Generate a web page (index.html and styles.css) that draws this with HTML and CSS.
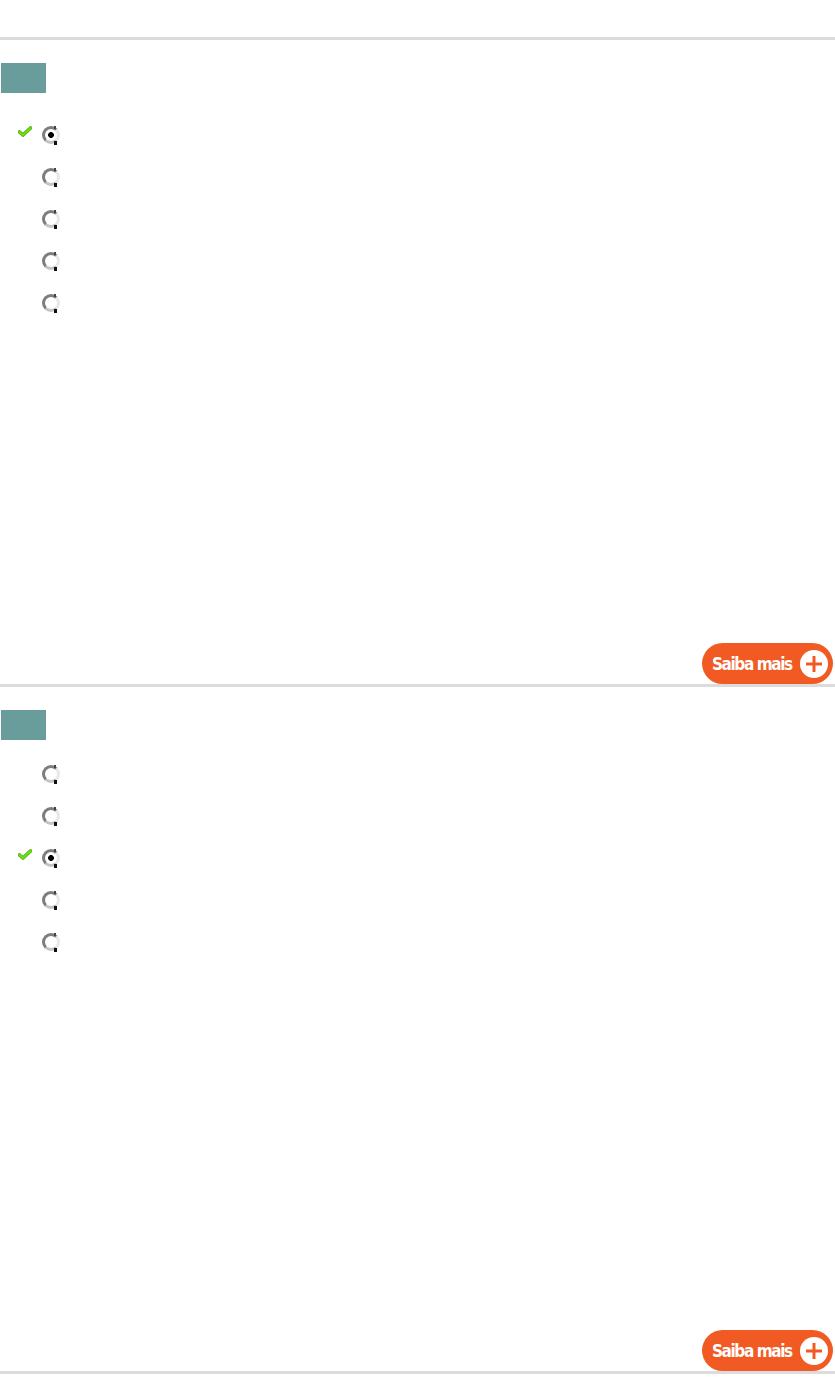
FILE: index.html
```html
<!DOCTYPE html>
<html lang="pt-BR">
<head>
    <meta charset="UTF-8">
    <meta name="viewport" content="width=device-width, initial-scale=1.0">
    <title>Quiz</title>
    <link rel="stylesheet" href="styles.css">
</head>
<body>
    <div class="quiz">
        <!-- Questão 1 -->
        <div class="question">
            <div class="q-number"></div>
            <ul class="options first">
                <li><span class="mark"><svg width="14" height="11" viewBox="0 0 14 11"><path d="M1.5 6 L5 9 L12.5 2" fill="none" stroke="#4aa80c" stroke-width="3.6" stroke-linecap="round" stroke-linejoin="round"/><path d="M1.5 6 L5 9 L12.5 2" fill="none" stroke="#6fe014" stroke-width="2.2" stroke-linecap="round" stroke-linejoin="round"/></svg></span><span class="radio checked"></span></li>
                <li><span class="mark"></span><span class="radio"></span></li>
                <li><span class="mark"></span><span class="radio"></span></li>
                <li><span class="mark"></span><span class="radio"></span></li>
                <li><span class="mark"></span><span class="radio"></span></li>
            </ul>
            <div class="answer-space"></div>
            <div class="actions">
                <a href="#" class="btn-more"><span class="btn-label">Saiba mais</span> <span class="plus"></span></a>
            </div>
        </div>

        <!-- Questão 2 -->
        <div class="question">
            <div class="q-number"></div>
            <ul class="options">
                <li><span class="mark"></span><span class="radio"></span></li>
                <li><span class="mark"></span><span class="radio"></span></li>
                <li><span class="mark"><svg width="14" height="11" viewBox="0 0 14 11"><path d="M1.5 6 L5 9 L12.5 2" fill="none" stroke="#4aa80c" stroke-width="3.6" stroke-linecap="round" stroke-linejoin="round"/><path d="M1.5 6 L5 9 L12.5 2" fill="none" stroke="#6fe014" stroke-width="2.2" stroke-linecap="round" stroke-linejoin="round"/></svg></span><span class="radio checked"></span></li>
                <li><span class="mark"></span><span class="radio"></span></li>
                <li><span class="mark"></span><span class="radio"></span></li>
            </ul>
            <div class="answer-space tall"></div>
            <div class="actions">
                <a href="#" class="btn-more"><span class="btn-label">Saiba mais</span> <span class="plus"></span></a>
            </div>
        </div>
        <div class="end-line"></div>
    </div>
</body>
</html>
```

FILE: styles.css
```css
body { margin: 0; background: #fff; font-family: "Liberation Sans", Arial, sans-serif; }

.quiz { padding-top: 37px; }

.question {
    border-top: 3px solid #dcdcdc;
    padding-top: 23px;
}

.q-number {
    width: 45px;
    height: 30px;
    margin-left: 1px;
    background: #699d9b;
}

.options {
    list-style: none;
    margin: 13px 0 0;
    padding: 0;
}

.options.first { margin-top: 21px; }

.options li {
    display: flex;
    align-items: center;
    height: 42px;
}

.mark {
    width: 14px;
    height: 11px;
    margin-left: 18px;
    margin-right: 10px;
    margin-top: -7px;
}

.mark svg { display: block; }

/* old style radio button */
.radio {
    position: relative;
    width: 18px;
    height: 18px;
    box-sizing: border-box;
    border-radius: 50%;
    border: 3px solid #7d7d7d;
    border-right-color: #e8e8e8;
    border-bottom-color: #c4c4c4;
    background: #fff;
}

.radio::after {
    content: "";
    position: absolute;
    right: 0;
    bottom: -4px;
    width: 3px;
    height: 4px;
    background: #111;
}

.radio::before {
    content: "";
    position: absolute;
    right: 1px;
    top: -3px;
    width: 2px;
    height: 3px;
    background: #444;
}

.radio.checked {
    background: radial-gradient(circle, #000 0 2.6px, #fff 3.2px);
}

.answer-space { height: 319px; }
.answer-space.tall { height: 367px; }

.actions {
    display: flex;
    justify-content: flex-end;
    padding-right: 2px;
}

.btn-more {
    display: flex;
    align-items: center;
    justify-content: space-between;
    height: 41px;
    width: 131px;
    box-sizing: border-box;
    padding: 0 5px 0 10px;
    border-radius: 21px;
    background: #f15a22;
    color: #fff;
    text-decoration: none;
    white-space: nowrap;
}

.btn-label {
    font-family: "Liberation Sans Narrow", "DejaVu Sans Condensed", sans-serif;
    font-weight: bold;
    font-size: 17px;
    letter-spacing: -1.4px;
}

.plus {
    position: relative;
    width: 28px;
    height: 28px;
    border-radius: 50%;
    background: #fff;
}

.plus::before, .plus::after {
    content: "";
    position: absolute;
    background: #f15a22;
    left: 50%;
    top: 50%;
    transform: translate(-50%, -50%);
}

.plus::before { width: 16px; height: 3px; }
.plus::after { width: 3px; height: 16px; }

.end-line { border-top: 3px solid #dcdcdc; }
```
